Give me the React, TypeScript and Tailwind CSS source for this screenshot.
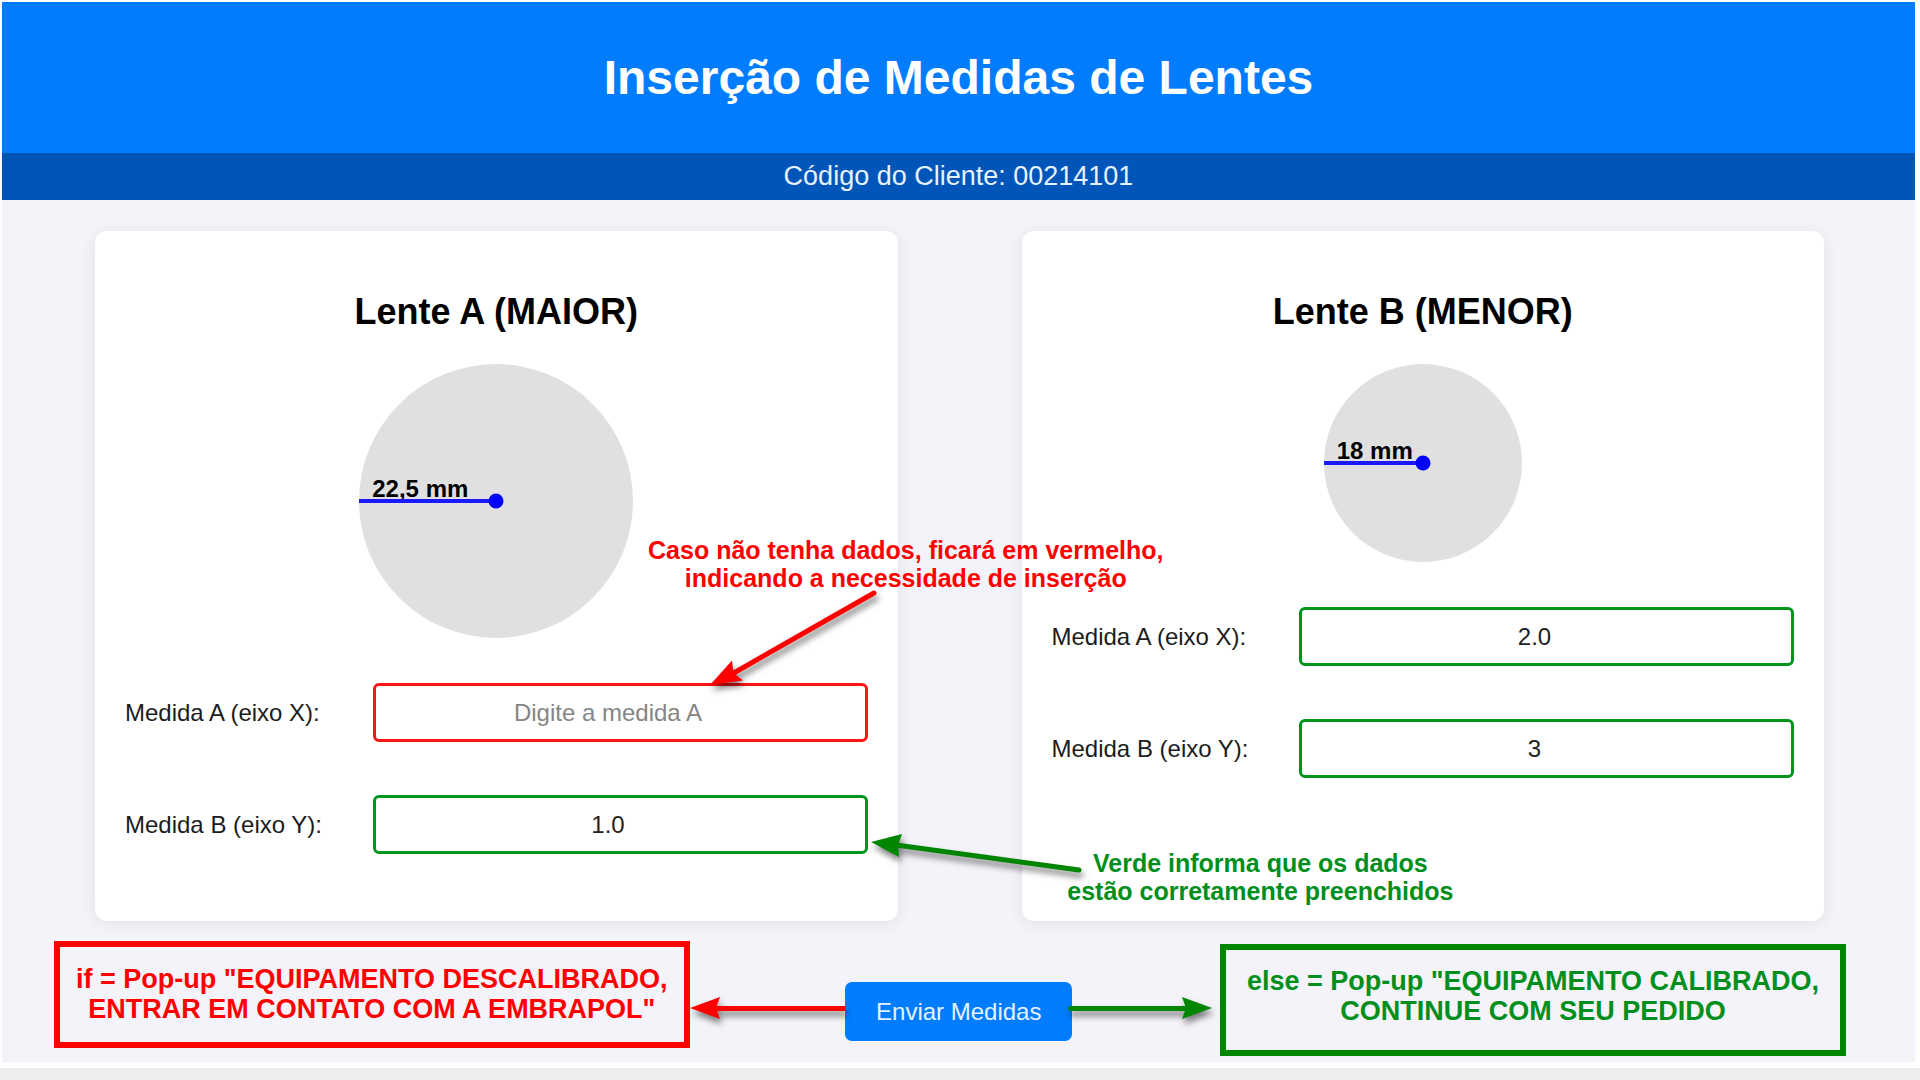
import { useId, useState, type ReactNode } from "react";

type MeasureProps = {
  label: string;
  placeholder: string;
  initial: string;
  children?: ReactNode;
};

function MeasureField({ label, placeholder, initial, children }: MeasureProps) {
  const id = useId();
  const [value, setValue] = useState(initial);
  const border = value.trim() === "" ? "border-[#ff1414]" : "border-[#00961e]";
  return (
    <div className="flex items-center">
      <label htmlFor={id} className="w-1/3 text-[24px] leading-[28px] text-[#1c1c1c]">
        {label}
      </label>
      <div className="relative w-2/3">
        <input
          id={id}
          type="text"
          value={value}
          placeholder={placeholder}
          onChange={(e) => setValue(e.target.value)}
          className={`block h-[59px] w-full rounded-md border-3 bg-white pr-10 pl-4 text-center text-[24px] text-[#222] outline-none placeholder:text-[#858585] ${border}`}
        />
        {children}
      </div>
    </div>
  );
}

function Lens({ size, radius }: { size: string; radius: string }) {
  return (
    <div className={`relative mx-auto rounded-full bg-[#e0e0e0] ${size}`}>
      <span className="absolute bottom-1/2 left-[13px] text-[24px] leading-[24px] font-bold whitespace-nowrap text-black">
        {radius}
      </span>
      <span className="absolute top-1/2 left-0 h-1 w-1/2 -translate-y-1/2 bg-[#1a1aff]" />
      <span className="absolute top-1/2 left-1/2 size-[15px] -translate-x-1/2 -translate-y-1/2 rounded-full bg-[#0000ff]" />
    </div>
  );
}

function LensCard({ title, children }: { title: string; children: ReactNode }) {
  return (
    <section className="rounded-xl bg-white px-[30px] pt-[60px] pb-[67px] shadow-[0_2px_16px_rgba(0,0,0,0.08)]">
      <h2 className="mb-[31px] text-center text-[36px] leading-[42px] font-bold text-black">{title}</h2>
      {children}
    </section>
  );
}

function Callout({ className, children }: { className: string; children: ReactNode }) {
  return (
    <p className={`pointer-events-none absolute z-10 text-center text-[25px] leading-[28px] font-bold whitespace-nowrap ${className}`}>
      {children}
    </p>
  );
}

const SHADOW = "drop-shadow-[2px_5px_3px_rgba(0,0,0,0.5)]";

export default function App() {
  return (
    <div className="min-h-screen bg-[#eeeeee] font-['Liberation_Sans',Arial,sans-serif]">
      <div className="bg-white pt-0.5 pr-[5px] pb-1.5 pl-0.5">
        <div className="bg-[#f4f3f9] pb-1.5">
          <header>
            <h1 className="bg-[#007dff] py-[47px] text-center text-[48px] leading-[57px] font-bold text-white">
              Inserção de Medidas de Lentes
            </h1>
            <p className="bg-[#0055b8] py-2 text-center text-[27px] leading-[31px] text-[#e6f2ff]">
              Código do Cliente: 00214101
            </p>
          </header>

          <main>
            <div className="mr-[91px] ml-[93px] mt-[31px] grid grid-cols-2 gap-[124px]">
              <LensCard title="Lente A (MAIOR)">
                <Lens size="size-[274px]" radius="22,5 mm" />
                <div className="mt-[45px] flex flex-col gap-[53px]">
                  <MeasureField label="Medida A (eixo X):" placeholder="Digite a medida A" initial="">
                    <Callout className="top-[-147px] right-[-296px] text-[#ff0000]">
                      Caso não tenha dados, ficará em vermelho,
                      <br />
                      indicando a necessidade de inserção
                    </Callout>
                    <svg
                      width="190"
                      height="110"
                      viewBox="0 0 190 110"
                      aria-hidden="true"
                      className={`pointer-events-none absolute top-[-98px] right-[-23px] z-10 overflow-visible ${SHADOW}`}
                    >
                      <path d="M173 8 31 89" stroke="#ff0000" strokeWidth="5" strokeLinecap="round" />
                      <path d="M9 100 31 75.5 32.5 88 42 95.5Z" fill="#ff0000" />
                    </svg>
                  </MeasureField>
                  <MeasureField label="Medida B (eixo Y):" placeholder="Digite a medida B" initial="1.0">
                    <Callout className="top-[54px] right-[-586px] text-[#008f1c]">
                      Verde informa que os dados
                      <br />
                      estão corretamente preenchidos
                    </Callout>
                    <svg
                      width="230"
                      height="60"
                      viewBox="0 0 230 60"
                      aria-hidden="true"
                      className={`pointer-events-none absolute top-[30px] right-[-223px] z-10 overflow-visible ${SHADOW}`}
                    >
                      <path d="M218 45 35 20" stroke="#008500" strokeWidth="5" strokeLinecap="round" />
                      <path d="M10 17 41 9 37 20.5 38 32Z" fill="#008500" />
                    </svg>
                  </MeasureField>
                </div>
              </LensCard>

              <LensCard title="Lente B (MENOR)">
                <Lens size="size-[198px]" radius="18 mm" />
                <div className="mt-[45px] flex flex-col gap-[53px]">
                  <MeasureField label="Medida A (eixo X):" placeholder="Digite a medida A" initial="2.0" />
                  <MeasureField label="Medida B (eixo Y):" placeholder="Digite a medida B" initial="3" />
                </div>
              </LensCard>
            </div>

            <div className="mt-5 mr-[69px] ml-[52px] flex items-start">
              <p className="border-6 border-[#ff0000] px-4 pt-[17px] pb-[18px] text-center text-[27px] leading-[30px] font-bold whitespace-nowrap text-[#ff0000]">
                if = Pop-up "EQUIPAMENTO DESCALIBRADO,
                <br />
                ENTRAR EM CONTATO COM A EMBRAPOL"
              </p>
              <div className={`relative z-10 mt-14 flex flex-[155_1_0%] items-center ${SHADOW}`}>
                <svg width="30" height="22" viewBox="0 0 30 22" aria-hidden="true" className="shrink-0">
                  <path d="M0 11 30 0 26 11 30 22Z" fill="#ff0000" />
                </svg>
                <span className="-ml-1 h-[5px] flex-1 bg-[#ff0000]" />
              </div>
              <button
                type="button"
                className="mt-[41px] h-[59px] rounded-[7px] bg-[#007dff] px-[31px] text-[24px] whitespace-nowrap text-[#e6f2ff]"
              >
                Enviar Medidas
              </button>
              <div className={`relative z-10 mt-14 -ml-1 mr-2 flex flex-[143_1_0%] items-center ${SHADOW}`}>
                <span className="-mr-1 h-[5px] flex-1 rounded-l-full bg-[#008500]" />
                <svg width="30" height="22" viewBox="0 0 30 22" aria-hidden="true" className="shrink-0">
                  <path d="M30 11 0 0 4 11 0 22Z" fill="#008500" />
                </svg>
              </div>
              <p className="mt-[3px] border-6 border-[#008500] px-[21px] pt-4 pb-6 text-center text-[27px] leading-[30px] font-bold whitespace-nowrap text-[#008f1c]">
                else = Pop-up "EQUIPAMENTO CALIBRADO,
                <br />
                CONTINUE COM SEU PEDIDO
              </p>
            </div>
          </main>
        </div>
      </div>
    </div>
  );
}
